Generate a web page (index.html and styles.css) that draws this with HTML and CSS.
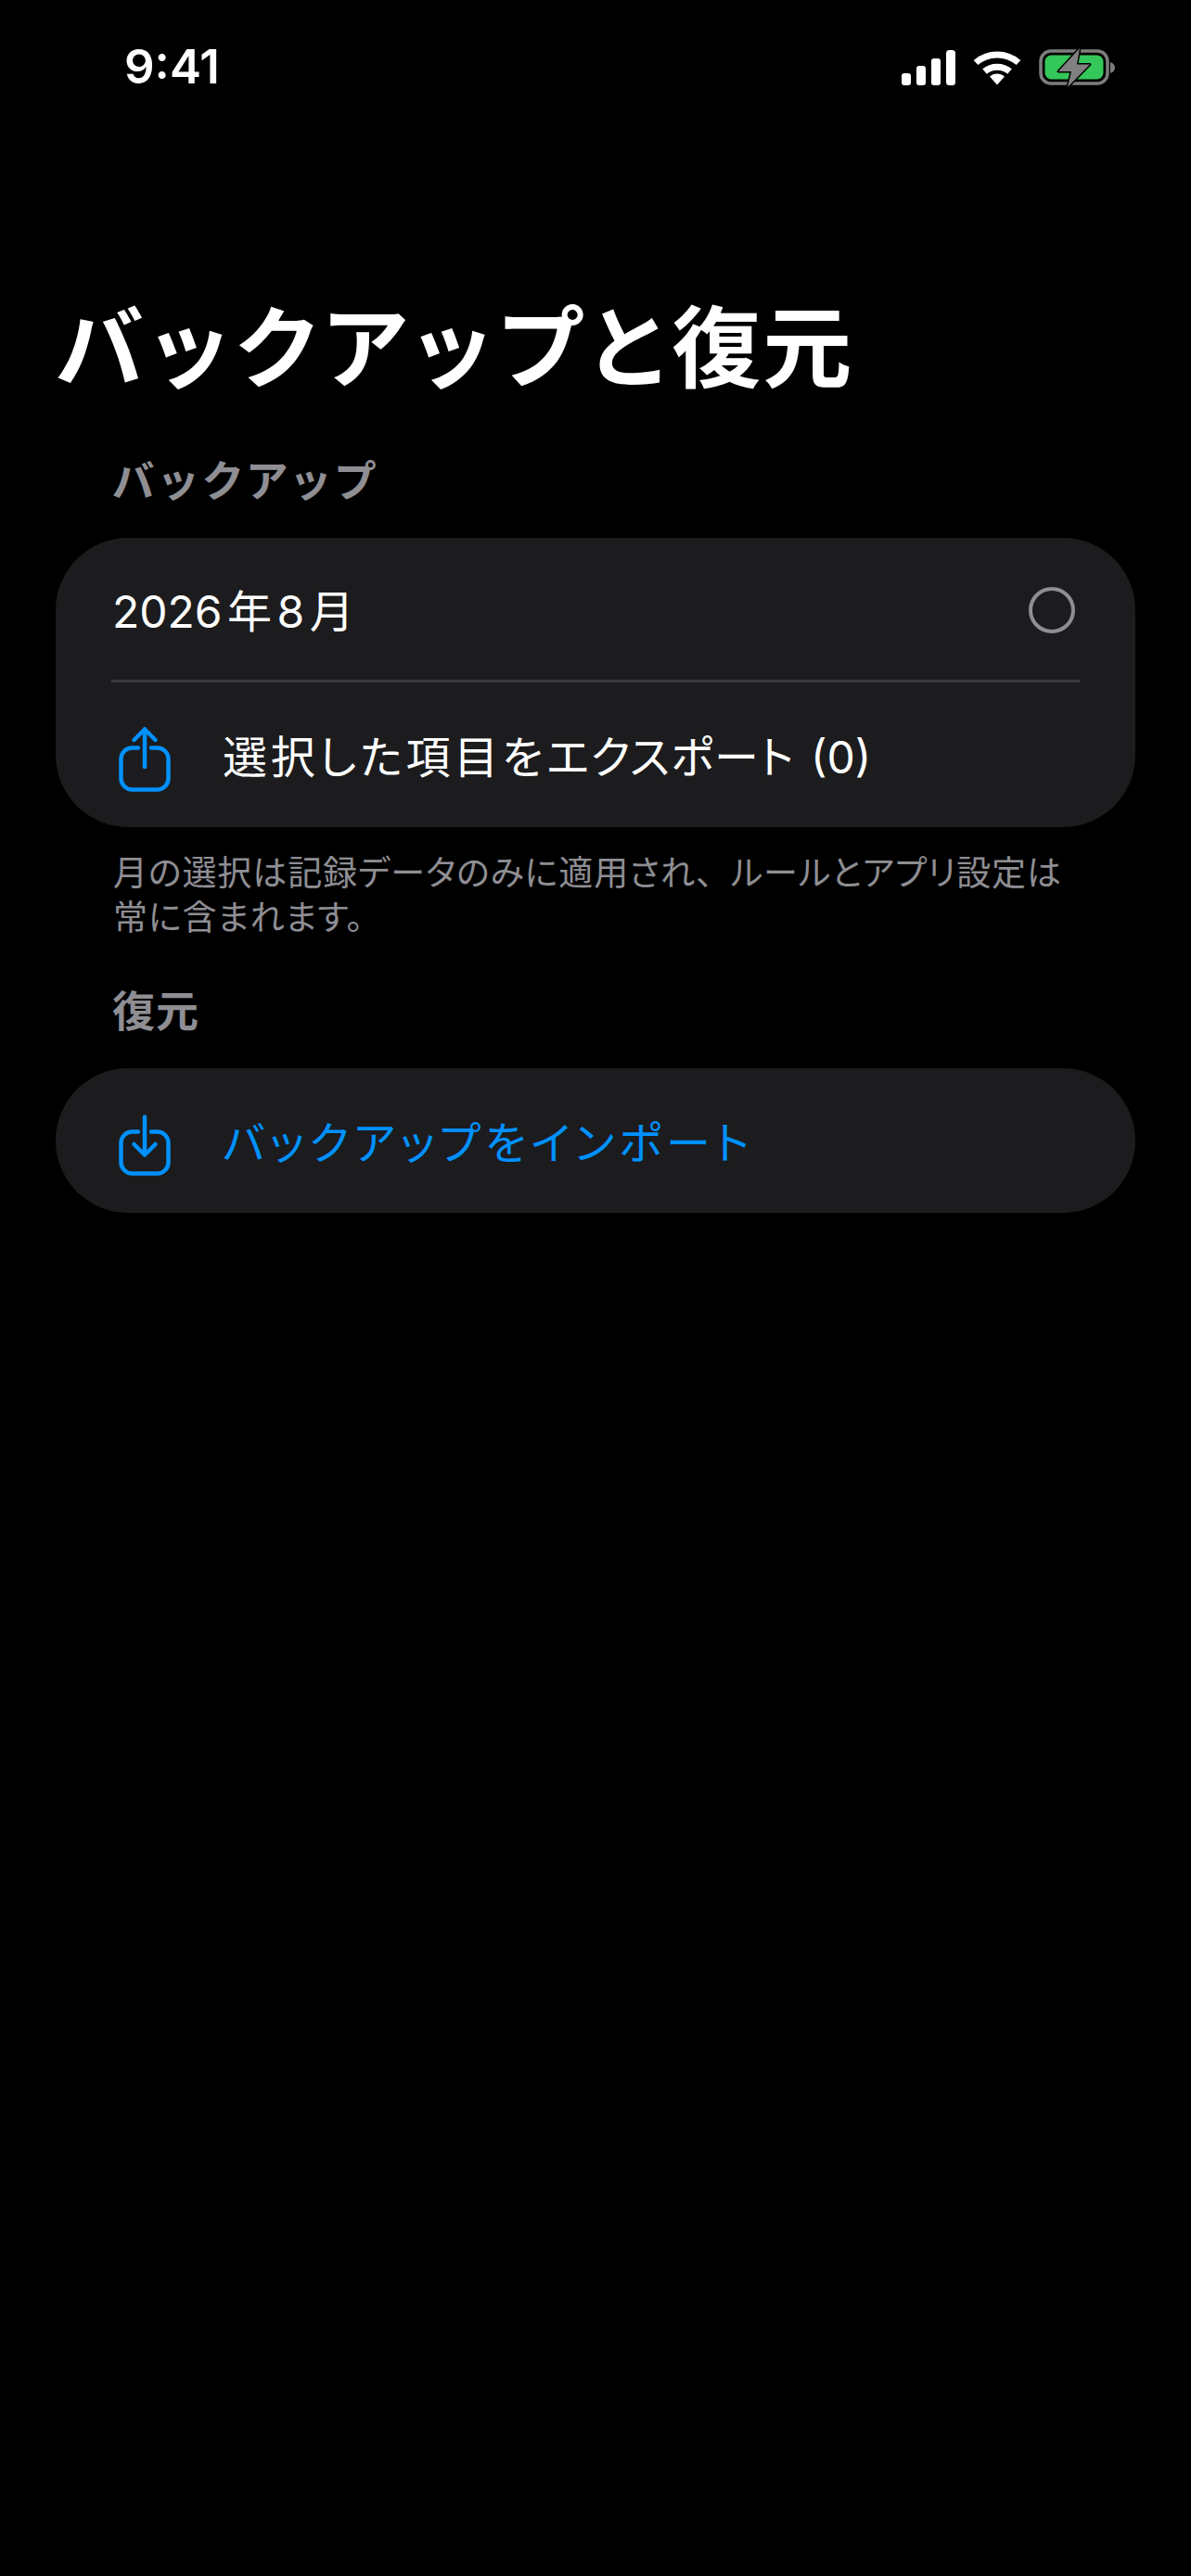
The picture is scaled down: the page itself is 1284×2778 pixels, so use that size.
FILE: index.html
```html
<!DOCTYPE html>
<html lang="ja">
<head>
<meta charset="utf-8">
<title>バックアップと復元</title>
<link rel="stylesheet" href="styles.css">
</head>
<body>
<div class="status">
  <span class="time">9:41</span>
  <div class="status-icons">
    <svg class="signal" width="58" height="38" viewBox="0 0 58 38"><rect x="0" y="25" width="10" height="13" rx="3" fill="#fff"/><rect x="16" y="17" width="10" height="21" rx="3" fill="#fff"/><rect x="32" y="9" width="10" height="29" rx="3" fill="#fff"/><rect x="48" y="0" width="10" height="38" rx="3.5" fill="#fff"/></svg>
    <svg class="wifi" width="52" height="38" viewBox="0 0 52 38"><path d="M3 13.500C16 2 36 2 49 13.500" fill="none" stroke="#fff" stroke-width="7"/><path d="M12.500 23C20 16.500 32 16.500 39.500 23" fill="none" stroke="#fff" stroke-width="7"/><path d="M18 28.500C22.500 24.500 29.500 24.500 34 28.500L26 37.500Z" fill="#fff"/></svg>
    <svg class="battery" width="84" height="46" viewBox="0 0 84 46"><rect x="2" y="5" width="72" height="35" rx="11" fill="none" stroke="#7d7d7d" stroke-width="3.500"/><rect x="6.500" y="9.500" width="63" height="26" rx="7" fill="#34c759"/><path d="M77 17c3 1 5 3 5 6s-2 5-5 6z" fill="#7d7d7d"/><path d="M44 2L21 27H35L31 44L55 19.500H41Z" fill="#808080" stroke="#000" stroke-width="3" stroke-linejoin="round" paint-order="stroke"/></svg>
  </div>
</div>
<h1 class="title">バックアップと<span class="kanji">復元</span></h1>
<h2 class="section backup">バックアップ</h2>
<div class="card">
  <div class="row row-month">
    <span class="label month">2026 年 8 月</span>
    <span class="radio"></span>
  </div>
  <div class="divider"></div>
  <div class="row">
    <svg class="icon share" width="64" height="80" viewBox="0 0 64 80" fill="none" stroke="#0091ff" stroke-width="4.500" stroke-linecap="round" stroke-linejoin="round"><path d="M25 25.500H18.500a12 12 0 0 0-12 12V58.500a12 12 0 0 0 12 12H45.500a12 12 0 0 0 12-12V37.500a12 12 0 0 0-12-12H39"/><path d="M32 5.500V46"/><path d="M20.500 17L32 5.500L43.500 17"/></svg>
    <span class="label export">選択した項目を<span class="kana">エクスポート</span> <span class="count">(0)</span></span>
  </div>
</div>
<p class="note">月の選択は記録データのみに適用され<span class="full">、</span>ルールとアプリ設定は<br>常に含まれます。</p>
<h2 class="section restore">復元</h2>
<div class="card">
  <div class="row">
    <svg class="icon" width="64" height="80" viewBox="0 0 64 80" fill="none" stroke="#0091ff" stroke-width="4.500" stroke-linecap="round" stroke-linejoin="round"><path d="M25 22.500H18.500a12 12 0 0 0-12 12V55.500a12 12 0 0 0 12 12H45.500a12 12 0 0 0 12-12V34.500a12 12 0 0 0-12-12H39"/><path d="M32 6.500V47"/><path d="M20.500 36L32 47.500L43.500 36"/></svg>
    <span class="label link">バックアップをインポート</span>
  </div>
</div>
</body>
</html>
```
FILE: styles.css
```css
* { box-sizing: border-box; }
html, body { margin: 0; padding: 0; background: #000; }
body {
  width: 1284px;
  height: 2778px;
  overflow: hidden;
  color: #fff;
  font-family: Inter, "Noto Sans CJK JP", sans-serif;
  font-feature-settings: "palt";
}
.status {
  height: 144px;
  padding: 42px 80px 0 134px;
  display: flex;
  justify-content: space-between;
  align-items: flex-start;
}
.time { font-size: 51px; font-weight: 600; line-height: 60px; }
.status-icons { display: flex; align-items: flex-start; padding-top: 8px; }
.signal { margin-top: 4px; }
.wifi { margin: 4px 0 0 19px; }
.battery { margin: 0 0 0 19px; }
.title {
  margin: 0;
  padding: 170px 0 0 60px;
  font-size: 96px;
  line-height: 122px;
  font-weight: 700;
  letter-spacing: 9px;
}
.kanji { letter-spacing: 2px; }
.section {
  margin: 0 0 32px;
  padding-left: 121px;
  font-size: 46px;
  line-height: 60px;
  font-weight: 700;
  color: #8e8e93;
}
.backup { margin-top: 52px; letter-spacing: 6.600px; }
.restore { letter-spacing: 1px; }
.card {
  margin: 0 60px;
  background: #1c1c1e;
  border-radius: 78px;
}
.row {
  height: 156px;
  padding: 0 64px;
  display: flex;
  align-items: center;
  gap: 52px;
}
.row-month { height: 153px; padding: 0 65px 0 61px; justify-content: space-between; }
.icon { flex: none; margin-top: 16px; }
.share { margin-top: 14px; }
.label { font-size: 48px; line-height: 64px; margin-top: 6px; }
.month { word-spacing: -8px; }
.export { letter-spacing: 3.800px; }
.kana { letter-spacing: 1px; }
.count { letter-spacing: 0; }
.link { color: #0091ff; letter-spacing: 5px; }
.radio {
  width: 50px;
  height: 50px;
  margin-top: 3px;
  border: 4px solid #8e8e93;
  border-radius: 50%;
}
.divider { height: 3px; margin: 0 60px; background: #3a3a3c; }
.note {
  margin: 0;
  padding: 26px 122px 0;
  font-size: 37px;
  line-height: 48px;
  letter-spacing: 0.9px;
  height: 168px;
  color: #8e8e93;
}
.full { font-feature-settings: normal; }
```
